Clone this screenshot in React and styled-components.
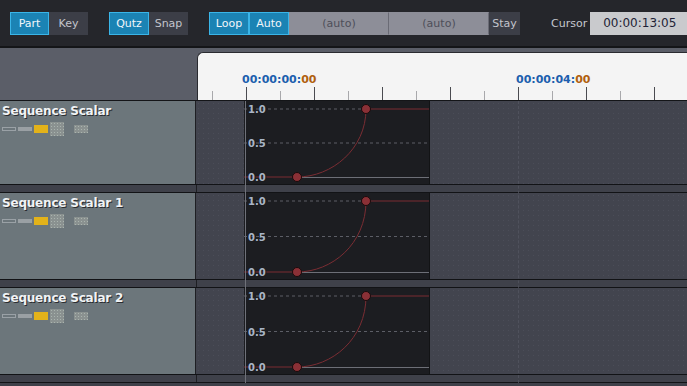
import React from 'react';
import styled, { createGlobalStyle } from 'styled-components';

const GlobalStyle = createGlobalStyle`
  html, body { margin: 0; padding: 0; background: #3e4049; }
  body { font-family: "DejaVu Sans", Verdana, sans-serif; }
`;

const Page = styled.div`
  width: 687px;
  height: 386px;
  overflow: hidden;
  background: #3e4049;
`;

const Toolbar = styled.div`
  height: 46px;
  display: flex;
  align-items: center;
  padding-left: 10px;
  background: #25262b;
  border-bottom: 2px solid #141518;
`;

const Group = styled.div`
  display: flex;
  margin-right: ${(p) => p.gap ?? 21}px;
`;

const Btn = styled.div`
  box-sizing: border-box;
  width: ${(p) => p.w || 40}px;
  height: 23px;
  display: flex;
  align-items: center;
  justify-content: center;
  font-size: 11px;
  color: ${(p) => (p.active ? '#f2f6fa' : p.field ? '#4d4e5a' : '#c3c5cc')};
  background: ${(p) => (p.active ? '#1b83b4' : p.field ? '#8d8e98' : '#3c3e47')};
  border: 1px solid ${(p) => (p.active ? '#3ab5e8' : p.field ? '#8d8e98' : '#3c3e47')};
  ${(p) => p.field && 'border-right: 1px solid #6a6b75;'}
`;

const CursorLabel = styled.span`
  font-size: 11px;
  color: #c6c8ce;
  margin-left: 31px;
  margin-right: 3px;
`;

const TimeBox = styled.div`
  flex: 1;
  height: 23px;
  display: flex;
  align-items: center;
  padding-left: 13px;
  font-size: 12px;
  color: #1e1f36;
  background: #c9cacd;
`;

const HeaderRow = styled.div`
  display: flex;
  height: 52px;
  border-bottom: 1px solid #141518;
  background: #5b5e68;
`;

const HeaderLeft = styled.div`
  width: 197px;
`;

const Ruler = styled.div`
  position: relative;
  flex: 1;
  margin-top: 4px;
  background: #f4f4f4;
  border-top-left-radius: 6px;
  border: 1px solid #2a2b30;
  border-right: none;
  border-bottom: none;
`;

const RulerLabel = styled.div`
  position: absolute;
  top: 20px;
  left: ${(p) => p.x}px;
  font-size: 11px;
  font-weight: bold;
  color: #1c5fae;
  span { color: #b0600e; }
`;

const Ticks = styled.svg`
  position: absolute;
  left: 0;
  bottom: 0;
`;

const Tracks = styled.div`
  position: relative;
`;

const Track = styled.div`
  display: flex;
  height: ${(p) => p.h}px;
`;

const TrackLabel = styled.div`
  width: 196px;
  padding: 3px 0 0 2px;
  box-sizing: border-box;
  background: #6c767b;
  border-right: 1px solid #1e1f23;
`;

const TrackName = styled.div`
  font-size: 12px;
  font-weight: bold;
  color: #f1f3f5;
  text-shadow: 1px 1px 0 #2a2c30;
  letter-spacing: -0.2px;
`;

const IconRow = styled.div`
  display: flex;
  align-items: center;
  height: 14px;
  margin-top: 4px;
  gap: 2px;
`;

const Mini = styled.div`
  box-sizing: border-box;
  width: 14px;
  height: ${(p) => p.h}px;
  margin-right: ${(p) => p.mr || 0}px;
  background: ${(p) => p.bg || 'transparent'};
  border: ${(p) => (p.outline ? '1px solid #9aa1a6' : 'none')};
  ${(p) => p.dots && `
    background-image: radial-gradient(#aab4ae 0.6px, transparent 0.8px);
    background-size: 3px 3px;
  `}
`;

const Lane = styled.div`
  flex: 1;
  background-color: #42444e;
  background-image: radial-gradient(#4b4d58 0.7px, transparent 0.9px);
  background-size: 5px 5px;
`;

const Clip = styled.div`
  width: 185px;
  height: 100%;
  margin-left: 48px;
  background: #1c1d21;
  border-right: 1px solid #121315;
`;

const Strip = styled.div`
  height: 7px;
  border-top: 1px solid #121316;
  border-bottom: 1px solid #121316;
  background: #3f414a;
  display: flex;
  &::before {
    content: '';
    width: 196px;
    border-right: 1px solid #1e1f23;
  }
`;

const CursorLine = styled.div`
  position: absolute;
  top: 0;
  bottom: 0;
  left: 245px;
  width: 1px;
  background: #6f7179;
`;

const GuideLine = styled.div`
  position: absolute;
  top: 0;
  bottom: 0;
  left: 518px;
  width: 0;
  border-left: 1px dashed #555762;
  opacity: 0.7;
`;

const Curve = ({ h }) => {
  const y1 = 8;
  const y0 = h - 7;
  const ym = (y0 + y1) / 2;
  const x0 = 53;
  const x1 = 122;
  const lbl = { fontSize: 10, fontWeight: 'bold', fill: '#a9b5c6', fontFamily: 'DejaVu Sans, sans-serif' };
  const shadow = { ...lbl, fill: '#1a1b1e' };
  return (
    <svg width="185" height={h} style={{ display: 'block' }}>
      <line x1="0" y1={y1} x2={x1} y2={y1} stroke="#5c5e66" strokeDasharray="3 3" />
      <line x1={x1} y1={y1} x2="185" y2={y1} stroke="#7b2d33" />
      <line x1="0" y1={ym} x2="185" y2={ym} stroke="#5c5e66" strokeDasharray="3 3" />
      <line x1={x0} y1={y0 + 0.5} x2="185" y2={y0 + 0.5} stroke="#6d6f77" />
      <line x1="0" y1={y0} x2={x0} y2={y0} stroke="#7b2d33" />
      <path
        d={`M${x0} ${y0} C${x0 + 35} ${y0} ${x1} ${y0 - 28} ${x1} ${y1}`}
        fill="none"
        stroke="#7b2d33"
      />
      <text x="4" y={y1 + 4} style={shadow} dx="1" dy="1">1.0</text>
      <text x="4" y={y1 + 4} style={lbl}>1.0</text>
      <text x="4" y={ym + 4} style={shadow} dx="1" dy="1">0.5</text>
      <text x="4" y={ym + 4} style={lbl}>0.5</text>
      <text x="4" y={y0 + 4} style={shadow} dx="1" dy="1">0.0</text>
      <text x="4" y={y0 + 4} style={lbl}>0.0</text>
      <circle cx={x0} cy={y0} r="4.5" fill="#8a3036" stroke="#1a0b0c" />
      <circle cx={x1} cy={y1} r="4.5" fill="#8a3036" stroke="#1a0b0c" />
    </svg>
  );
};

const tracks = [
  { name: 'Sequence Scalar', h: 83 },
  { name: 'Sequence Scalar 1', h: 86 },
  { name: 'Sequence Scalar 2', h: 86 },
];

const ticks = [];
for (let k = 0; k < 8; k++) {
  ticks.push({ x: 14 + 68 * k, major: false });
  ticks.push({ x: 48 + 68 * k, major: true });
}

export default function App() {
  return (
    <Page>
      <GlobalStyle />
      <Toolbar>
        <Group>
          <Btn active w={39}>Part</Btn>
          <Btn w={39}>Key</Btn>
        </Group>
        <Group>
          <Btn active w={40}>Qutz</Btn>
          <Btn w={39}>Snap</Btn>
        </Group>
        <Group gap={0}>
          <Btn active w={40}>Loop</Btn>
          <Btn active w={40}>Auto</Btn>
          <Btn field w={100}>(auto)</Btn>
          <Btn field w={100}>(auto)</Btn>
          <Btn w={31}>Stay</Btn>
        </Group>
        <CursorLabel>Cursor</CursorLabel>
        <TimeBox>00:00:13:05</TimeBox>
      </Toolbar>
      <HeaderRow>
        <HeaderLeft />
        <Ruler>
          <RulerLabel x={44}>00:00:00:<span>00</span></RulerLabel>
          <RulerLabel x={318}>00:00:04:<span>00</span></RulerLabel>
          <Ticks width="490" height="14">
            {ticks.map((t) => (
              <line
                key={t.x}
                x1={t.x + 0.5}
                x2={t.x + 0.5}
                y1={t.major ? 1 : 5}
                y2="14"
                stroke={t.major ? '#4a4b50' : '#a8a8ab'}
              />
            ))}
          </Ticks>
        </Ruler>
      </HeaderRow>
      <Tracks>
        {tracks.map((t) => (
          <React.Fragment key={t.name}>
            <Track h={t.h}>
              <TrackLabel>
                <TrackName>{t.name}</TrackName>
                <IconRow>
                  <Mini outline h={4} />
                  <Mini bg="#9aa0a4" h={4} />
                  <Mini bg="#e3b21a" h={8} />
                  <Mini bg="#8a9190" dots h={14} mr={8} />
                  <Mini bg="#8a9190" dots h={8} />
                </IconRow>
              </TrackLabel>
              <Lane>
                <Clip>
                  <Curve h={t.h} />
                </Clip>
              </Lane>
            </Track>
            <Strip />
          </React.Fragment>
        ))}
        <GuideLine />
        <CursorLine />
      </Tracks>
    </Page>
  );
}
